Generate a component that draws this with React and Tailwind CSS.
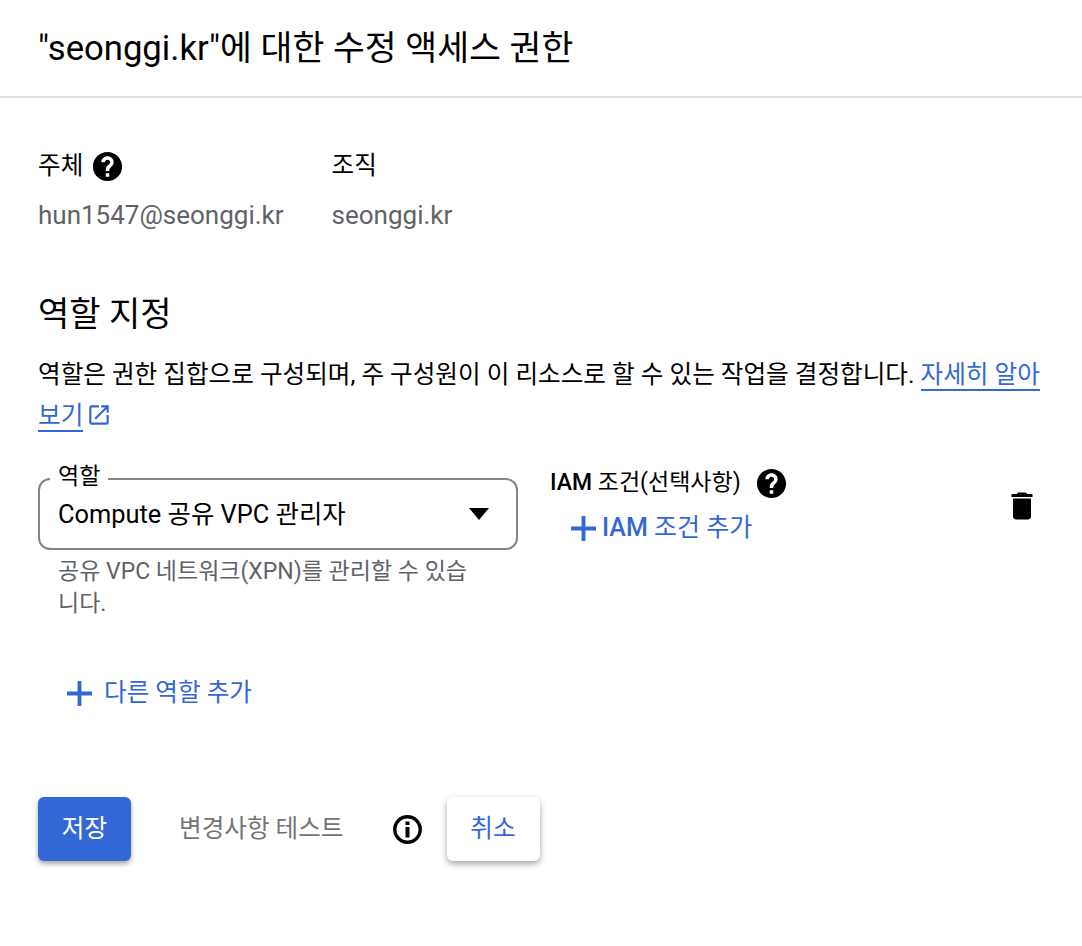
const FONT = "font-['Roboto','Noto_Sans_CJK_KR',sans-serif]";

function Help({ className = "" }) {
  return (
    <svg viewBox="0 0 24 24" className={className} fill="#000">
      <path d="M12 2C6.48 2 2 6.48 2 12s4.48 10 10 10 10-4.48 10-10S17.52 2 12 2zm1.2 17h-2.4v-2.4h2.4V19zm2.1-7.5l-1 1C13.5 13.3 13.2 13.9 13.2 15h-2.4v-.6c0-1.1.45-2.1 1.17-2.83l1.3-1.3c.37-.36.53-.76.53-1.27 0-.95-.85-1.7-1.8-1.7s-1.8.75-1.8 1.7H7.8c0-2.3 1.9-4 4.2-4s4.2 1.7 4.2 4c0 .95-.36 1.85-.9 2.5z" />
    </svg>
  );
}

function Plus({ className = "" }) {
  return (
    <svg viewBox="0 0 26 26" className={className} fill="#3367d6">
      <path d="M11 0h4v11h11v4H15v11h-4V15H0v-4h11z" />
    </svg>
  );
}

export default function App() {
  return (
    <div className={`${FONT} w-[1082px] h-[946px] bg-white text-black overflow-hidden`}>
      <header className="h-[98px] border-b-2 border-[#e0e0e0] pl-[38px] pt-[26px]">
        <h1 className="text-[34.67px] leading-[44px] font-normal">"seonggi.kr"에 대한 수정 액세스 권한</h1>
      </header>

      <main className="pl-[38px] pr-[42px]">
        <section className="flex gap-[48px] pt-[52px]">
          <div>
            <div className="flex items-center h-[32px] text-[24.6px] leading-[32px]">
              주체
              <Help className="w-[35px] h-[35px] ml-[7px]" />
            </div>
            <div className="mt-[17px] text-[26px] leading-[32px] text-[#5f6368]">hun1547@seonggi.kr</div>
          </div>
          <div>
            <div className="h-[32px] text-[24.6px] leading-[32px]">조직</div>
            <div className="mt-[17px] text-[26px] leading-[32px] text-[#5f6368]">seonggi.kr</div>
          </div>
        </section>

        <h2 className="mt-[61px] text-[34px] leading-[44px] font-normal">역할 지정</h2>

        <p className="mt-[18px] text-[24.6px] leading-[41px] w-[1010px]">
          역할은 권한 집합으로 구성되며, 주 구성원이 이 리소스로 할 수 있는 작업을 결정합니다.{" "}
          <a className="text-[#3367d6] border-b-2 border-[#3367d6]">자세히 알아보기</a>
          <svg viewBox="0 0 24 24" className="inline-block w-[26px] h-[26px] ml-[3px] align-[-4px]" fill="#3367d6">
            <path d="M19 19H5V5h7V3H5a2 2 0 0 0-2 2v14a2 2 0 0 0 2 2h14c1.1 0 2-.9 2-2v-7h-2v7zM14 3v2h3.59l-9.83 9.83 1.41 1.41L19 6.41V10h2V3h-7z" />
          </svg>
        </p>

        <section className="flex mt-[42px]">
          <div className="w-[480px]">
            <div className="relative h-[72px] border-2 border-[#80868b] rounded-[12px] flex items-center justify-between pl-[18px] pr-[27px] text-[25.4px]">
              <span className="absolute -top-[18px] left-[10px] bg-white px-[8px] text-[23px] leading-[30px]">역할</span>
              <span>Compute 공유 VPC 관리자</span>
              <svg viewBox="0 0 20 12" className="w-[20px] h-[12px]" fill="#000"><path d="M0 0h20L10 12z" /></svg>
            </div>
            <p className="mt-[6px] pl-[20px] pr-[30px] text-[23px] leading-[32px] text-[#5f6368]">
              공유 VPC 네트워크(XPN)를 관리할 수 있습<br />니다.
            </p>
          </div>

          <div className="ml-[32px] flex-1">
            <div className="flex items-center h-[34px] mt-[-12px] text-[23px]">
              <span className="font-medium">IAM</span>&nbsp;조건(선택사항)
              <Help className="w-[35px] h-[35px] ml-[13px]" />
            </div>
            <div className="flex items-center ml-[21px] mt-[10px] h-[36px] text-[25px] text-[#3367d6]">
              <Plus className="w-[25px] h-[25px] mr-[6px]" />
              <span className="font-medium">IAM</span>&nbsp;조건 추가
            </div>
          </div>

          <svg viewBox="0 0 24 24" className="w-[36px] h-[36px] mt-[10px]" fill="#000">
            <path d="M6 19c0 1.1.9 2 2 2h8c1.1 0 2-.9 2-2V7H6v12zM19 4h-3.5l-1-1h-5l-1 1H5v2h14V4z" />
          </svg>
        </section>

        <div className="flex items-center ml-[29px] mt-[55px] h-[36px] text-[24.6px] text-[#3367d6]">
          <Plus className="w-[25px] h-[25px] mr-[12px]" />
          다른 역할 추가
        </div>

        <div className="flex items-center mt-[86px] text-[24.6px]">
          <button className="w-[93px] h-[64px] rounded-[6px] bg-[#3367d6] text-white shadow-[0_3px_5px_rgba(0,0,0,0.35)]">저장</button>
          <span className="ml-[48px] text-[#757575]">변경사항 테스트</span>
          <svg viewBox="0 0 29 29" className="w-[29px] h-[29px] ml-[49px]" fill="none">
            <circle cx="14.5" cy="14.5" r="12.7" stroke="#000" strokeWidth="3.4" />
            <path d="M12.5 6.5h4v3.5h-4zM12.5 12h4v10.5h-4z" fill="#000" />
          </svg>
          <button className="ml-[25px] w-[93px] h-[64px] rounded-[6px] bg-white text-[#3367d6] shadow-[0_3px_6px_rgba(0,0,0,0.35)]">취소</button>
        </div>
      </main>
    </div>
  );
}
